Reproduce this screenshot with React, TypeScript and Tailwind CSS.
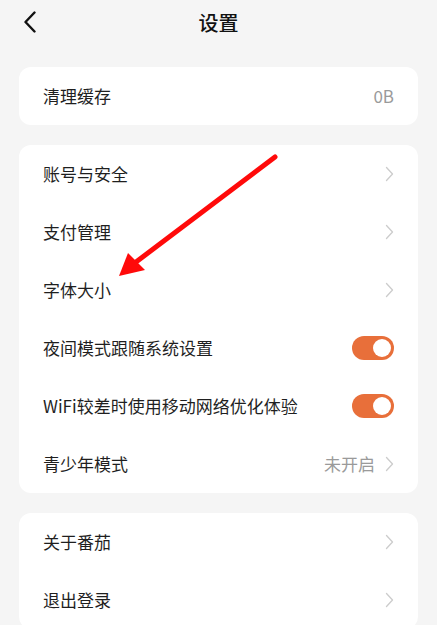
import React from 'react';

type Row = { label: string; value?: string; toggle?: boolean; arrow?: boolean };

const Chevron = () => (
  <svg width="9" height="16" viewBox="0 0 9 16" className="ml-[10px]">
    <path d="M1.5 1.5 L7.5 8 L1.5 14.5" fill="none" stroke="#cccccc" strokeWidth="1.3" strokeLinecap="round" strokeLinejoin="round" />
  </svg>
);

const Toggle = () => (
  <div className="w-[42px] h-[24px] rounded-full bg-[#e86f3a] flex items-center justify-end px-[3px]">
    <div className="w-[18px] h-[18px] rounded-full bg-white" />
  </div>
);

function Item({ label, value, toggle, arrow = true }: Row) {
  return (
    <div className="h-[58px] flex items-center justify-between pl-[24px] pr-[24px]">
      <span className="text-[17px] text-[#1f1f1f]">{label}</span>
      <div className="flex items-center">
        {value && <span className="text-[17px] text-[#9a9a9a]">{value}</span>}
        {toggle ? <Toggle /> : arrow && <Chevron />}
      </div>
    </div>
  );
}

function Card({ rows }: { rows: Row[] }) {
  return (
    <div className="mx-[19px] bg-white rounded-[12px] overflow-hidden">
      {rows.map((r) => (
        <Item key={r.label} {...r} />
      ))}
    </div>
  );
}

export default function App() {
  return (
    <div
      className="relative w-[437px] h-[625px] overflow-hidden bg-[#f5f5f5]"
      style={{ fontFamily: '"Noto Sans CJK SC", "Noto Sans", sans-serif' }}
    >
      <div className="relative h-[45px] flex items-center justify-center">
        <svg width="14" height="22" viewBox="0 0 14 22" className="absolute left-[23px] top-[11px]">
          <path d="M11.5 1.5 L2.5 11 L11.5 20.5" fill="none" stroke="#111111" strokeWidth="2.4" strokeLinecap="round" strokeLinejoin="round" />
        </svg>
        <span className="text-[20px] font-medium text-[#111111]">设置</span>
      </div>

      <div className="flex flex-col gap-[20px] pt-[22px]">
        <Card rows={[{ label: '清理缓存', value: '0B', arrow: false }]} />
        <Card
          rows={[
            { label: '账号与安全' },
            { label: '支付管理' },
            { label: '字体大小' },
            { label: '夜间模式跟随系统设置', toggle: true },
            { label: 'WiFi较差时使用移动网络优化体验', toggle: true },
            { label: '青少年模式', value: '未开启' },
          ]}
        />
        <Card rows={[{ label: '关于番茄' }, { label: '退出登录' }]} />
      </div>

      <svg className="absolute left-0 top-0 pointer-events-none" width="437" height="625">
        <line x1="275" y1="157" x2="136" y2="262" stroke="#ff0a0a" strokeWidth="5" strokeLinecap="round" />
        <polygon points="119,276 128,253 145,270" fill="#ff0a0a" />
      </svg>
    </div>
  );
}
